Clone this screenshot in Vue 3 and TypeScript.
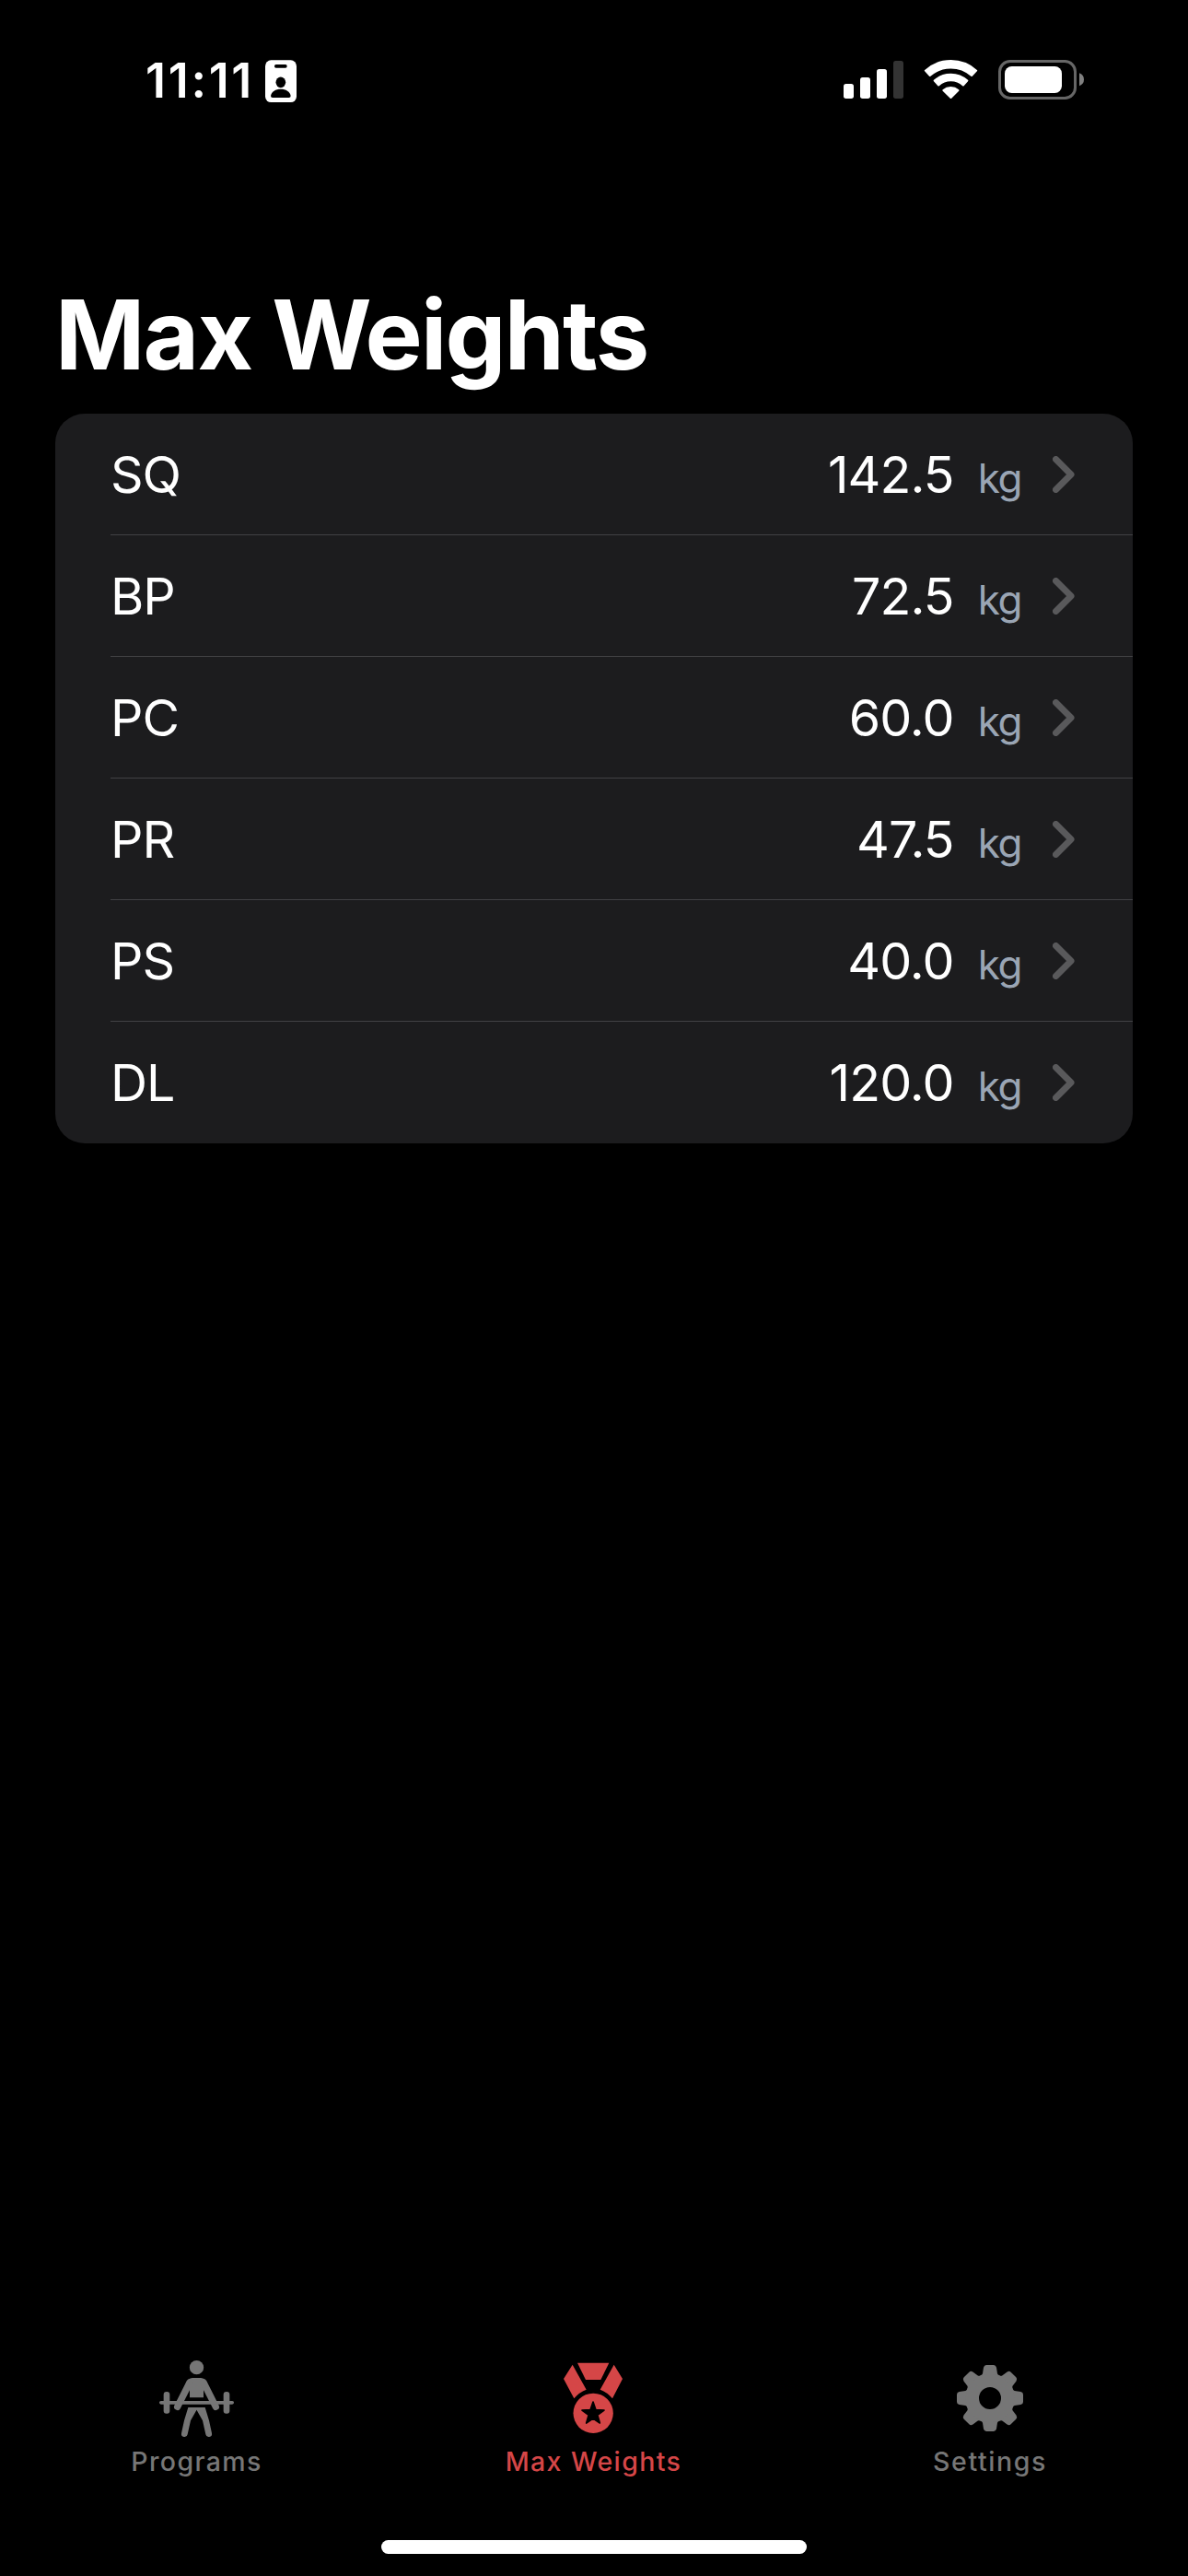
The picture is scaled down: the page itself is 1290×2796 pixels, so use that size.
<script setup lang="ts">
interface Lift {
  name: string
  weight: number
}

const lifts: Lift[] = [
  { name: 'SQ', weight: 142.5 },
  { name: 'BP', weight: 72.5 },
  { name: 'PC', weight: 60 },
  { name: 'PR', weight: 47.5 },
  { name: 'PS', weight: 40 },
  { name: 'DL', weight: 120 },
]

const toothAngles: number[] = [0, 45, 90, 135, 180, 225, 270, 315]
</script>

<template>
  <div class="screen">
    <header class="status">
      <span class="time">11:11</span>
      <svg class="badge" viewBox="444 45 102 138">
        <rect x="444" y="46" width="102" height="137" rx="19" fill="#fff" />
        <rect x="474" y="60" width="41" height="11" rx="5" />
        <ellipse cx="494.500" cy="118" rx="16" ry="17.500" />
        <path d="M468 168Q462 168 462 162C464 148 478 140 494.500 140S525 148 527 162Q527 168 521 168Z" />
      </svg>
      <div class="indicators">
        <svg width="65" height="43" viewBox="48 45 195 129" fill="#fff">
          <rect x="48" y="123" width="33" height="48" rx="8" />
          <rect x="102" y="102" width="33" height="69" rx="8" />
          <rect x="156" y="75" width="33" height="96" rx="8" />
          <rect x="210" y="48" width="33" height="123" rx="8" fill="#333" />
        </svg>
        <svg width="59" height="43" viewBox="309 45 177 129" fill="#fff" stroke="#fff" stroke-width="6" stroke-linejoin="round">
          <path d="M314.500 80A124 124 0 0 1 480.500 80L465.200 96.200A102 102 0 0 0 329.300 96.200Z" />
          <path d="M344 112.600A80 80 0 0 1 451 112.600L437.600 127.400A60 60 0 0 0 357.400 127.400Z" />
          <path d="M373 144A38 38 0 0 1 421.500 144L397.500 168Z" />
        </svg>
        <svg width="93" height="43" viewBox="552 45 279 129">
          <rect x="556.500" y="49.500" width="246" height="120" rx="34" fill="none" stroke="#666" stroke-width="9" />
          <rect x="573" y="66" width="186" height="87" rx="23" fill="#fff" />
          <path d="M816 88Q831 94 831 109T816 130Z" fill="#808080" />
        </svg>
      </div>
    </header>

    <main class="content">
      <h1 class="title">Max Weights</h1>
      <ul class="card">
        <li v-for="lift in lifts" :key="lift.name" class="row">
          <span class="name">{{ lift.name }}</span>
          <span class="weight">{{ lift.weight.toFixed(1) }}</span>
          <span class="unit">kg</span>
          <svg class="chevron" viewBox="0 0 24 40">
            <path d="M3.500 3.500L20 20L3.500 36.500" />
          </svg>
        </li>
      </ul>
    </main>

    <nav class="tabs">
      <a class="tab">
        <svg class="icon" viewBox="114 60 270 270">
          <circle cx="250.500" cy="89" r="23" />
          <path d="M215 142Q222 123 237 123H264Q279 123 286 142L273 160V187H228V160Z" />
          <path d="M228 138L188 217M273 138L313 217" class="arm" />
          <rect x="129" y="198" width="243" height="11" rx="5.500" />
          <rect x="143" y="168" width="20" height="71" rx="9" />
          <rect x="338" y="168" width="20" height="71" rx="9" />
          <path d="M223 219H278L291 262L300 303A10 10 0 0 1 280 307L270 262L250.500 227L231 262L221 307A10 10 0 0 1 201 303L210 262Z" />
        </svg>
        <span class="label">Programs</span>
      </a>
      <a class="tab active">
        <svg class="icon" viewBox="207 60 270 270">
          <path d="M291 74H394L367 129H318Z" />
          <path d="M275 80L320 161Q296 170 280 190L246 126Z" />
          <path d="M410 80L365 161Q389 170 405 190L438 126Z" />
          <circle cx="342.500" cy="238" r="65" />
          <path class="star" d="M342 201L351 227L378 228L356.500 244L364 270L342 255L320 270L327.500 244L306 228L333 227Z" />
        </svg>
        <span class="label">Max Weights</span>
      </a>
      <a class="tab">
        <svg class="icon" viewBox="120 60 270 270">
          <g transform="translate(255 189)">
            <path
              v-for="angle in toothAngles"
              :key="angle"
              :transform="`rotate(${angle})`"
              d="M-31 -60V-74Q-25 -76 -24 -80L-21 -100Q-19 -108 -12 -108H12Q19 -108 21 -100L24 -80Q25 -76 31 -74V-60Z"
            />
            <circle r="57.500" fill="none" stroke="currentColor" stroke-width="43" />
          </g>
        </svg>
        <span class="label settings">Settings</span>
      </a>
    </nav>
    <div class="home"></div>
  </div>
</template>

<style>
body {
  background: #000;
}
</style>

<style scoped>
.screen {
  display: flex;
  flex-direction: column;
  width: 1290px;
  height: 2796px;
  background: #000;
  color: #fff;
  font-family: Inter, 'Liberation Sans', sans-serif;
  overflow: hidden;
}

.status {
  display: flex;
  align-items: flex-start;
  height: 177px;
  box-sizing: border-box;
  padding: 65px 113px 0 158px;
}

.time {
  width: 130px;
  font-size: 52px;
  font-weight: 600;
  line-height: 46px;
  letter-spacing: 2.7px;
  white-space: nowrap;
}

.badge {
  width: 34px;
  height: 46px;
}

.indicators {
  display: flex;
  gap: 22px;
  margin-left: auto;
}

.content {
  flex: 1;
  padding: 0 60px;
}

.title {
  margin: 123px 0 23px;
  font-size: 104.5px;
  font-weight: 700;
  line-height: 126px;
  letter-spacing: -1.8px;
  word-spacing: -1px;
  white-space: nowrap;
}

.card {
  margin: 0;
  padding: 0;
  list-style: none;
  background: #1c1c1e;
  border-radius: 32px;
  overflow: hidden;
}

.row {
  display: flex;
  align-items: baseline;
  height: 132px;
  margin-left: 60px;
  padding-right: 63px;
  box-sizing: border-box;
  line-height: 132px;
  border-bottom: 1px solid #414144;
}

.row:last-child {
  border-bottom: 0;
}

.name {
  flex: 1;
  font-size: 55.5px;
  letter-spacing: -1px;
}

.weight {
  font-size: 55.5px;
  letter-spacing: -0.9px;
}

.unit {
  margin: 0 34px 0 26px;
  font-size: 44px;
  letter-spacing: -1.4px;
  color: #9aa5b4;
}

.chevron {
  width: 24px;
  height: 40px;
}

.chevron path {
  fill: none;
  stroke: #59595b;
  stroke-width: 7;
  stroke-linecap: round;
  stroke-linejoin: round;
}

.tabs {
  display: grid;
  grid-template-columns: 426px 436px 426px;
  height: 197px;
}

.tab {
  display: flex;
  flex-direction: column;
  align-items: center;
  color: #767676;
}

.tab.active {
  color: #d54647;
}

.icon {
  width: 90px;
  height: 90px;
  fill: currentColor;
}

.arm {
  fill: none;
  stroke: currentColor;
  stroke-width: 22;
  stroke-linecap: round;
}

.star {
  fill: #000;
  stroke: #000;
  stroke-width: 5;
  stroke-linejoin: round;
}

.label {
  margin-top: 4px;
  padding-left: 1px;
  font-size: 28.5px;
  font-weight: 450;
  line-height: 36px;
  letter-spacing: 1.4px;
  white-space: nowrap;
}

.label.settings {
  padding-left: 0;
  letter-spacing: 1.6px;
}

.home {
  width: 462px;
  height: 15px;
  margin: 0 auto 24px;
  border-radius: 8px;
  background: #fff;
}
</style>
